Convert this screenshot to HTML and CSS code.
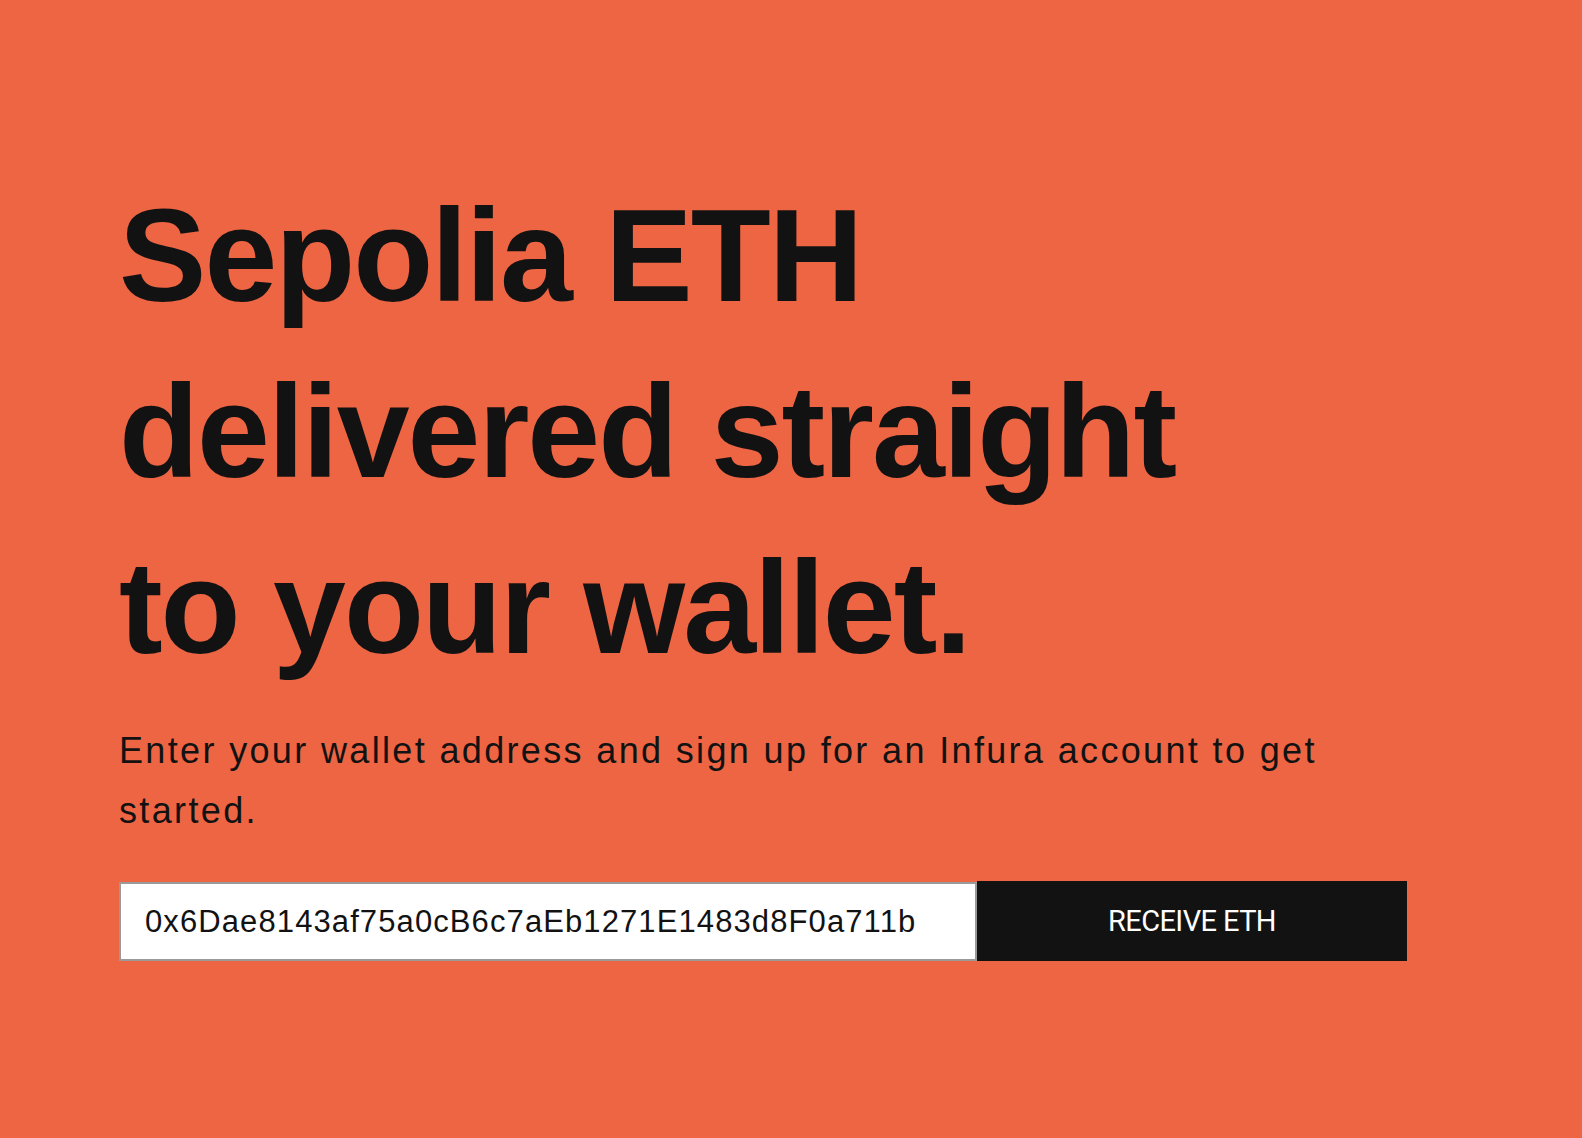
FILE: index.html
```html
<!DOCTYPE html>
<html lang="en">
<head>
<meta charset="utf-8">
<title>Sepolia Faucet</title>
<link rel="stylesheet" href="styles.css">
</head>
<body>
<main class="hero">
  <h1 class="title">Sepolia ETH<br>delivered straight<br>to your wallet.</h1>
  <p class="lead">Enter your wallet address and sign up for an Infura account to get started.</p>
  <form class="form">
    <input class="address" type="text" value="0x6Dae8143af75a0cB6c7aEb1271E1483d8F0a711b">
    <button class="submit" type="button">RECEIVE ETH</button>
  </form>
</main>
</body>
</html>
```
FILE: styles.css
```css
html, body {
  margin: 0;
  padding: 0;
  background: #ee6544;
  height: 100%;
}
body {
  font-family: "Liberation Sans", Arial, sans-serif;
  color: #121212;
}
.hero {
  padding: 168px 0 0 119px;
  width: 1290px;
}
.title {
  margin: 0;
  font-size: 131px;
  font-weight: 700;
  line-height: 176px;
  letter-spacing: -2px;
}
.lead {
  margin: 25px 0 0;
  font-size: 36px;
  line-height: 60px;
  font-weight: 400;
  letter-spacing: 2.35px;
}
.form {
  display: flex;
  margin-top: 40px;
}
.address {
  box-sizing: border-box;
  width: 858px;
  height: 79px;
  margin-top: 1px;
  border: 2px solid #9a9a9a;
  background: #fff;
  padding: 0 0 0 24px;
  font-family: "Liberation Sans", Arial, sans-serif;
  font-size: 31px;
  letter-spacing: 1.1px;
  color: #121212;
  outline: none;
}
.submit {
  width: 430px;
  height: 80px;
  border: 0;
  background: #121212;
  color: #fff;
  font-family: Roboto, "Liberation Sans", Arial, sans-serif;
  font-size: 29px;
  letter-spacing: -0.6px;
  padding: 0;
}
```
